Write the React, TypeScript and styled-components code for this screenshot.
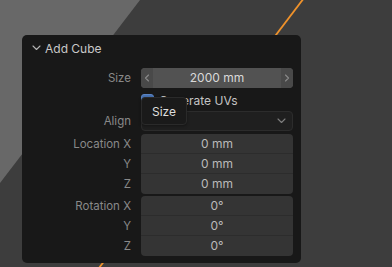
import styled, { createGlobalStyle } from 'styled-components'

const GlobalStyle = createGlobalStyle`
  html, body { margin: 0; padding: 0; background: #3d3d3d; }
  body { font-family: Inter, 'DejaVu Sans', sans-serif; -webkit-font-smoothing: antialiased; }
`

const Viewport = styled.div`
  position: relative;
  width: 392px;
  height: 267px;
  overflow: hidden;
  background: #3d3d3d;
`

const Backdrop = styled.svg`
  position: absolute;
  left: 0;
  top: 0;
`

const Panel = styled.section`
  position: absolute;
  left: 22px;
  top: 35px;
  width: 279px;
  height: 228px;
  box-sizing: border-box;
  background: #181818;
  border-radius: 5px;
  padding: 0 8px 7px 0;
  display: flex;
  flex-direction: column;
`

const Header = styled.div`
  height: 26px;
  display: flex;
  align-items: center;
  gap: 4px;
  padding-left: 10px;
  color: #c9c9c9;
  font-size: 12px;
`

const Body = styled.div`
  display: flex;
  flex-direction: column;
  padding-top: 7px;
`

const Row = styled.div<{ $gap?: number }>`
  display: grid;
  grid-template-columns: 1fr 152px;
  column-gap: 10px;
  margin-top: ${(p) => p.$gap ?? 0}px;
`

const Labels = styled.div`
  display: flex;
  flex-direction: column;
`

const Label = styled.div`
  height: 20px;
  line-height: 20px;
  text-align: right;
  color: #898989;
  font-size: 11.5px;
  white-space: nowrap;
`

const SliderField = styled.div`
  height: 20px;
  box-sizing: border-box;
  border-radius: 4px;
  background: #525252;
  display: grid;
  grid-template-columns: 12px 1fr 12px;
  align-items: center;
  overflow: hidden;
  color: #d9d9d9;
  font-size: 12px;
`

const Arrow = styled.div`
  height: 100%;
  display: flex;
  align-items: center;
  justify-content: center;
  background: #494949;
`

const Value = styled.div`
  text-align: center;
  line-height: 20px;
`

const CheckRow = styled.label`
  height: 20px;
  display: flex;
  align-items: center;
  gap: 5px;
  color: #c4c4c4;
  font-size: 12px;
`

const Checkbox = styled.span`
  width: 13px;
  height: 13px;
  box-sizing: border-box;
  border-radius: 3px;
  background: #4772b3;
  border: 1px solid #5a84c2;
`

const Dropdown = styled.div`
  height: 20px;
  box-sizing: border-box;
  border-radius: 4px;
  background: #1f1f1f;
  border: 1px solid #2c2c2c;
  display: flex;
  align-items: center;
  justify-content: space-between;
  padding: 0 6px 3px 7px;
  color: #cfcfcf;
  font-size: 12px;
`

const DropChevron = styled.span`
  display: flex;
  margin-top: 3px;
`

const FieldGroup = styled.div`
  border-radius: 4px;
  overflow: hidden;
  background: #343434;
  display: flex;
  flex-direction: column;
`

const Cell = styled.div<{ $last?: boolean }>`
  height: 20px;
  box-sizing: border-box;
  line-height: 20px;
  text-align: center;
  color: #bababa;
  font-size: 12px;
  border-bottom: ${(p) => (p.$last ? 'none' : '1px solid #2c2c2c')};
`

const Tooltip = styled.div`
  position: absolute;
  left: 141px;
  top: 97px;
  width: 46px;
  height: 28px;
  box-sizing: border-box;
  background: #1a1a1a;
  border: 1px solid #2a2a2a;
  border-radius: 4px;
  padding-left: 10px;
  line-height: 27px;
  color: #dedede;
  font-size: 12px;
  box-shadow: 0 1px 3px rgba(0, 0, 0, 0.35);
`

function Chevron({ dir, color = '#8a8a8a' }: { dir: 'left' | 'right' | 'down'; color?: string }) {
  const d =
    dir === 'left' ? 'M4.5 1 L1.5 4 L4.5 7' : dir === 'right' ? 'M1.5 1 L4.5 4 L1.5 7' : 'M1 2 L4.5 5.5 L8 2'
  const w = dir === 'down' ? 9 : 6
  return (
    <svg width={w} height="8" viewBox={`0 0 ${w} 8`}>
      <path d={d} fill="none" stroke={color} strokeWidth="1.1" strokeLinecap="round" strokeLinejoin="round" />
    </svg>
  )
}

const axes = ['X', 'Y', 'Z']

export default function App() {
  return (
    <Viewport>
      <GlobalStyle />
      <Backdrop width="392" height="267" viewBox="0 0 392 267">
        <polygon points="0,0 140,0 0,183" fill="#686868" />
        <line x1="304" y1="-2" x2="99" y2="268" stroke="#ef922b" strokeWidth="1.8" />
      </Backdrop>

      <Panel>
        <Header>
          <Chevron dir="down" color="#b4b4b4" />
          <span>Add Cube</span>
        </Header>
        <Body>
          <Row>
            <Labels>
              <Label>Size</Label>
            </Labels>
            <SliderField>
              <Arrow>
                <Chevron dir="left" />
              </Arrow>
              <Value>2000 mm</Value>
              <Arrow>
                <Chevron dir="right" />
              </Arrow>
            </SliderField>
          </Row>
          <Row $gap={2}>
            <span />
            <CheckRow>
              <Checkbox />
              Generate UVs
            </CheckRow>
          </Row>
          <Row $gap={1}>
            <Labels>
              <Label>Align</Label>
            </Labels>
            <Dropdown>
              <span>World</span>
              <DropChevron>
                <Chevron dir="down" color="#7e7e7e" />
              </DropChevron>
            </Dropdown>
          </Row>
          <Row $gap={3}>
            <Labels>
              {axes.map((a, i) => (
                <Label key={a}>{i === 0 ? `Location ${a}` : a}</Label>
              ))}
            </Labels>
            <FieldGroup>
              {axes.map((a, i) => (
                <Cell key={a} $last={i === 2}>
                  0 mm
                </Cell>
              ))}
            </FieldGroup>
          </Row>
          <Row $gap={2}>
            <Labels>
              {axes.map((a, i) => (
                <Label key={a}>{i === 0 ? `Rotation ${a}` : a}</Label>
              ))}
            </Labels>
            <FieldGroup>
              {axes.map((a, i) => (
                <Cell key={a} $last={i === 2}>
                  0°
                </Cell>
              ))}
            </FieldGroup>
          </Row>
        </Body>
      </Panel>

      <Tooltip>Size</Tooltip>
    </Viewport>
  )
}
